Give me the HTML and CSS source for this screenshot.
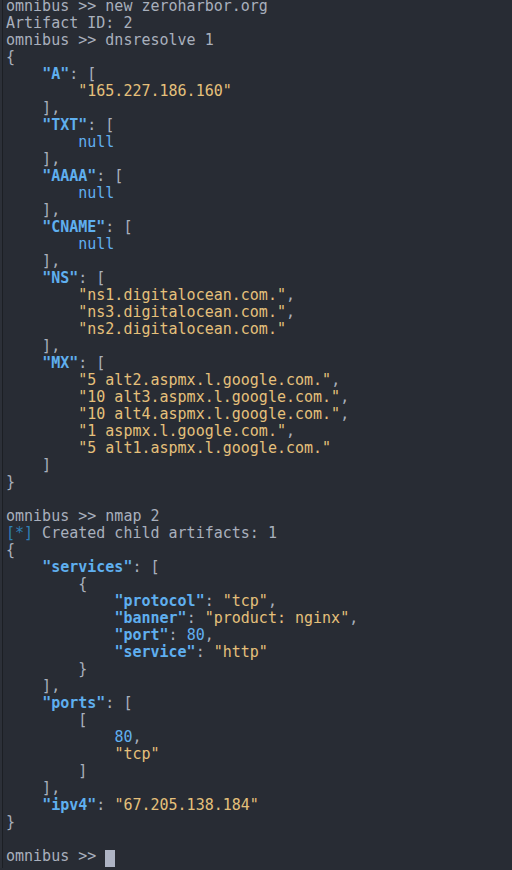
FILE: index.html
```html
<!DOCTYPE html>
<html>
<head>
<meta charset="utf-8">
<link rel="stylesheet" href="styles.css">
</head>
<body>
<div class="term">
<pre class="out">omnibus &gt;&gt; new zeroharbor.org
Artifact ID: 2
omnibus &gt;&gt; dnsresolve 1
{
    <span class="k">"A"</span>: [
        <span class="s">"165.227.186.160"</span>
    ],
    <span class="k">"TXT"</span>: [
        <span class="n">null</span>
    ],
    <span class="k">"AAAA"</span>: [
        <span class="n">null</span>
    ],
    <span class="k">"CNAME"</span>: [
        <span class="n">null</span>
    ],
    <span class="k">"NS"</span>: [
        <span class="s">"ns1.digitalocean.com."</span>,
        <span class="s">"ns3.digitalocean.com."</span>,
        <span class="s">"ns2.digitalocean.com."</span>
    ],
    <span class="k">"MX"</span>: [
        <span class="s">"5 alt2.aspmx.l.google.com."</span>,
        <span class="s">"10 alt3.aspmx.l.google.com."</span>,
        <span class="s">"10 alt4.aspmx.l.google.com."</span>,
        <span class="s">"1 aspmx.l.google.com."</span>,
        <span class="s">"5 alt1.aspmx.l.google.com."</span>
    ]
}

omnibus &gt;&gt; nmap 2
<span class="info">[*]</span> Created child artifacts: 1
{
    <span class="k">"services"</span>: [
        {
            <span class="k">"protocol"</span>: <span class="s">"tcp"</span>,
            <span class="k">"banner"</span>: <span class="s">"product: nginx"</span>,
            <span class="k">"port"</span>: <span class="n">80</span>,
            <span class="k">"service"</span>: <span class="s">"http"</span>
        }
    ],
    <span class="k">"ports"</span>: [
        [
            <span class="n">80</span>,
            <span class="s">"tcp"</span>
        ]
    ],
    <span class="k">"ipv4"</span>: <span class="s">"67.205.138.184"</span>
}

omnibus &gt;&gt; <span class="cursor"> </span></pre>
</div>
</body>
</html>
```
FILE: styles.css
```css
html, body {
  margin: 0;
  padding: 0;
  background: #282c34;
  height: 100%;
  overflow: hidden;
}
.term {
  height: 870px;
  box-sizing: border-box;
  border-left: 2px solid #2c3038;
  box-shadow: inset 1px 0 0 #1c1f24;
  padding: 0 0 0 4px;
  background: #282c34;
}
.out {
  margin: -2px 0 0 0;
  font-family: "DejaVu Sans Mono", monospace;
  font-size: 15px;
  line-height: 17px;
  color: #a9b0bd;
  white-space: pre;
}
.k {
  color: #5fafef;
  font-weight: bold;
}
.s {
  color: #e5c07b;
}
.n {
  color: #61afef;
}
.info {
  color: #2f7fb6;
}
.cursor {
  display: inline-block;
  width: 10px;
  height: 17px;
  vertical-align: -2px;
  background: #aeb4c4;
}
```
